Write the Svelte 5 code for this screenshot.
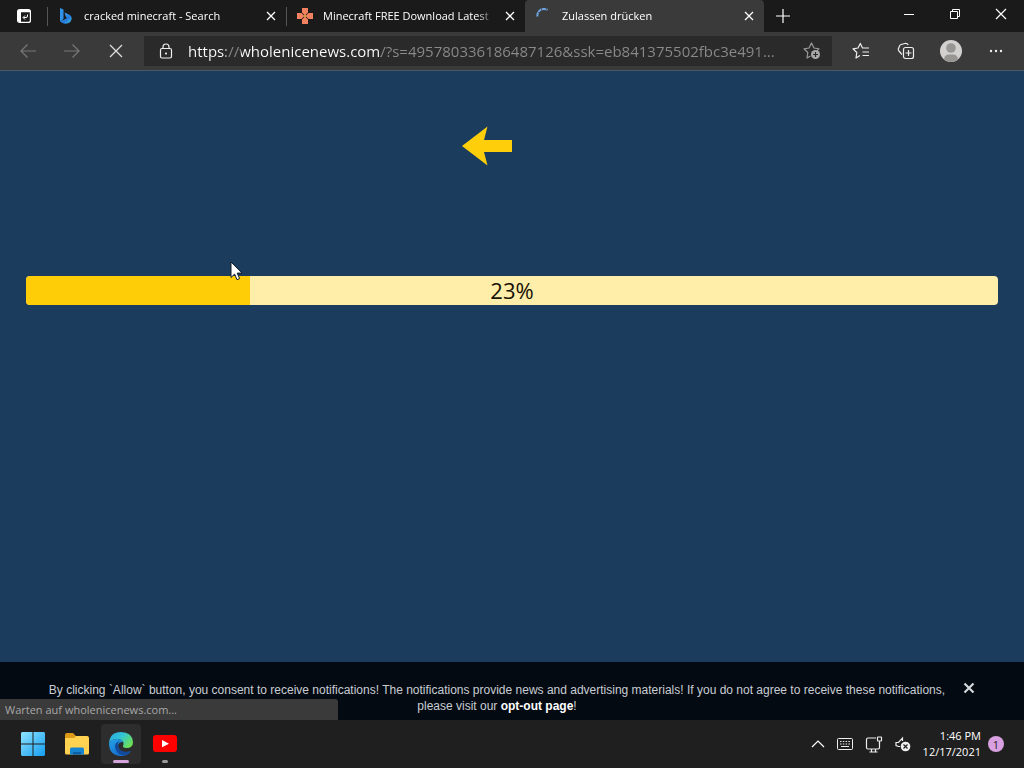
<script>
  const progress = 23;
  const tabs = [
    { title: 'cracked minecraft - Search', icon: 'bing', active: false },
    { title: 'Minecraft FREE Download Latest', icon: 'pad', active: false },
    { title: 'Zulassen drücken', icon: 'spinner', active: true }
  ];
  const url = 'https://wholenicenews.com/?s=495780336186487126&ssk=eb841375502fbc3e491...';
</script>

<div class="desktop">
  <header class="tabstrip">
    <button class="tab-actions" aria-label="Tab actions">
      <svg width="16" height="16" viewBox="0 0 16 16" fill="none" stroke="#fff">
        <rect x="1.6" y="1.6" width="12.800" height="12.800" rx="2" stroke-width="1.200" />
        <path d="M2 2h12v2.200H5V14H3l-1-1z" fill="#fff" stroke="none" />
        <path d="M11.500 6.500V8q0 1.500-1.500 1.500H7.500M9 7.500l-2 2 2 2" stroke-width="1" />
      </svg>
    </button>
    {#each tabs as tab}
      <div class="tab" class:active={tab.active}>
        <span class="favicon">
          {#if tab.icon === 'bing'}
            <svg width="16" height="16" viewBox="0 0 16 16">
              <defs>
                <linearGradient id="bing" x1="0" y1="0" x2="1" y2="1">
                  <stop offset="0" stop-color="#4fb4f5" /><stop offset=".6" stop-color="#2479dc" /><stop offset="1" stop-color="#3fd0e4" />
                </linearGradient>
              </defs>
              <path d="M2 0l3.500 1.500V11L2 13.500z" fill="#2f91ea" />
              <path d="M6.500 4.500l5 2.300Q14 8 13.700 11q-.6 3-3.700 4.300-3 1.200-6-.5-2-1-2-3 1 1.300 3.500.3l3.500-2-1.300-1.500z" fill="url(#bing)" />
            </svg>
          {:else if tab.icon === 'pad'}
            <svg width="16" height="16" viewBox="0 0 16 16" fill="#f0825f">
              <path d="M5 0h6v4.500L8 7.500l-3-3zM5 16h6v-4.500L8 8.500l-3 3zM0 5v6h4.500l3-3-3-3zM16 5v6h-4.500l-3-3 3-3z" />
              <path d="M5 5l6 6M11 5l-6 6" stroke="#57301f" />
              <circle cx="8" cy="8" r="1" fill="#f4c04a" />
            </svg>
          {:else}
            <svg width="16" height="16" viewBox="0 0 16 16" fill="none">
              <path d="M1.500 8.500A6.500 6.500 0 0 1 11.500 2" stroke="#6ea3e0" stroke-width="2" stroke-dasharray="4 .6" />
            </svg>
          {/if}
        </span>
        <span class="title">{tab.title}</span>
        <button class="close" aria-label="Close tab">
          <svg width="10" height="10" viewBox="0 0 10 10" stroke="#fff" stroke-width="1.3"><path d="M1 1l8 8M9 1L1 9" /></svg>
        </button>
      </div>
    {/each}
    <button class="new-tab" aria-label="New tab">
      <svg width="14" height="14" viewBox="0 0 14 14" stroke="#fff" stroke-width="1.200"><path d="M7 0v14M0 7h14" /></svg>
    </button>
    <div class="window-controls">
      <button aria-label="Minimize"><svg width="12" height="12" viewBox="0 0 12 12" stroke="#fff"><path d="M1 6.500h10" /></svg></button>
      <button aria-label="Restore"><svg width="12" height="12" viewBox="0 0 12 12" fill="none" stroke="#fff"><path d="M1.500 3.500h7v7h-7zM3.500 3V1.500h7v7H9" /></svg></button>
      <button aria-label="Close window"><svg width="12" height="12" viewBox="0 0 12 12" stroke="#fff" stroke-width="1.200"><path d="M1 1l10 10M11 1L1 11" /></svg></button>
    </div>
  </header>

  <nav class="toolbar" aria-label="Navigation">
    <div class="nav-buttons">
      <button aria-label="Back"><svg width="18" height="16" viewBox="0 0 18 16" fill="none" stroke="#777" stroke-width="1.200"><path d="M17 8H2M8.500 1.500L2 8l6.500 6.500" /></svg></button>
      <button aria-label="Forward"><svg width="18" height="16" viewBox="0 0 18 16" fill="none" stroke="#777" stroke-width="1.200"><path d="M1 8h15M9.500 1.500L16 8l-6.500 6.500" /></svg></button>
      <button aria-label="Stop loading"><svg width="14" height="14" viewBox="0 0 14 14" stroke="#ddd" stroke-width="1.300"><path d="M1 1l12 12M13 1L1 13" /></svg></button>
    </div>
    <div class="address">
      <button class="lock" aria-label="Site information">
        <svg width="14" height="17" viewBox="0 0 14 17" fill="none" stroke="#eee" stroke-width="1.200">
          <rect x="1.500" y="5.500" width="11" height="9.500" rx="1.500" /><path d="M4 5.500V4q0-3 3-3t3 3v1.500" /><circle cx="7" cy="10.500" r=".5" fill="#eee" />
        </svg>
      </button>
      <input type="text" aria-label="Address" value={url} spellcheck="false" />
      <button class="add-favorite" aria-label="Add to favorites">
        <svg width="18" height="18" viewBox="0 0 18 18" fill="none" stroke="#999" stroke-width="1.200">
          <path d="M7.500 14L4 16l.8-5.500L1 6.800l5-.8 2.500-5L11 6l5 .8-2 2" stroke-linejoin="round" />
          <circle cx="12.500" cy="12.500" r="4.500" fill="#aaa" stroke="none" /><path d="M12.500 10v5M10 12.500h5" stroke="#2b2b2b" />
        </svg>
      </button>
    </div>
    <div class="tools">
      <button aria-label="Favorites">
        <svg width="18" height="18" viewBox="0 0 18 18" fill="none" stroke="#eee" stroke-width="1.200" stroke-linejoin="round">
          <path d="M8 13.500L4 16l.8-5.500L1 6.800l5-.8L8.300 1.500 10.500 6H17M10.500 10H17M10.500 13.500H17" />
        </svg>
      </button>
      <button aria-label="Collections">
        <svg width="18" height="18" viewBox="0 0 18 18" fill="none" stroke="#eee" stroke-width="1.200">
          <path d="M5 12.500L2 9Q1 8 1.300 7L2.300 4.500Q2.700 3 4 2.500L8 1.500q2-.5 3.300 1.500" />
          <rect x="6.500" y="5.500" width="10" height="11" rx="2" /><path d="M11.500 8v6M8.500 11h6" />
        </svg>
      </button>
      <button aria-label="Profile">
        <svg width="22" height="22" viewBox="0 0 22 22">
          <defs><clipPath id="avatar"><circle cx="11" cy="11" r="11" /></clipPath></defs>
          <g clip-path="url(#avatar)"><path d="M0 0h22v22H0z" fill="#d2d1cf" /><circle cx="11" cy="8" r="4.800" fill="#989693" /><path d="M4 20q0-5.500 5-5.500h4q5 0 5 5.500v2H4z" fill="#989693" /></g>
        </svg>
      </button>
      <button aria-label="Settings and more">
        <svg width="14" height="4" viewBox="0 0 14 4" fill="#eee"><circle cx="2" cy="2" r="1.200" /><circle cx="7" cy="2" r="1.200" /><circle cx="12" cy="2" r="1.200" /></svg>
      </button>
    </div>
  </nav>

  <main>
    <svg class="arrow" width="50" height="40" viewBox="0 0 50 40" fill="#ffce0a" aria-hidden="true">
      <path d="M0 20L25.500 0.500 22 14h28v12H22l3.500 13.500z" />
    </svg>
    <div class="progress" role="progressbar" aria-label="Loading" aria-valuenow={progress} aria-valuemin="0" aria-valuemax="100">
      <div class="fill" style="width: {progress}%"></div>
      <span class="percent">{progress}%</span>
      <svg class="cursor" width="13" height="20" viewBox="0 0 13 20" aria-hidden="true">
        <path d="M1 1v15.500l3.600-3.400 2.400 5.600 2.600-1.100-2.400-5.500H12z" fill="#fff" stroke="#111c28" />
      </svg>
    </div>
    <aside class="consent">
      <p>By clicking `Allow` button, you consent to receive notifications! The notifications provide news and advertising materials! If you do not agree to receive these notifications, please visit our <a href="#opt-out">opt-out page</a>!</p>
      <button aria-label="Dismiss">
        <svg width="12" height="12" viewBox="0 0 12 12" stroke="#d5d8dc" stroke-width="2.200"><path d="M1.500 1.500l9 9M10.500 1.500l-9 9" /></svg>
      </button>
    </aside>
    <div class="status" role="status">Warten auf wholenicenews.com...</div>
  </main>

  <footer class="taskbar">
    <div class="apps">
      <button aria-label="Start">
        <svg width="24" height="24" viewBox="0 0 24 24">
          <defs><linearGradient id="win" gradientUnits="userSpaceOnUse" x1="0" y1="0" x2="24" y2="24"><stop offset="0" stop-color="#8fe4ff" /><stop offset="1" stop-color="#149df0" /></linearGradient></defs>
          <path d="M1 0h10.500v11.500H0V1zM12.500 0H23l1 1v10.500H12.500zM0 12.500h11.500V24H1l-1-1zM12.500 12.500H24V23l-1 1H12.500z" fill="url(#win)" />
        </svg>
      </button>
      <button aria-label="File Explorer">
        <svg width="26" height="24" viewBox="0 0 26 24">
          <path d="M1 3q0-2 2-2h6l3 3h10q2 0 2 2v6H1z" fill="#dd9a16" />
          <path d="M1 7q0-1 1-1h8l2-2h11q2 0 2 2v15q0 1.500-1.500 1.500h-21Q1 22.500 1 21z" fill="#ffd251" />
          <path d="M6 22.500V17q0-1.500 1.500-1.500h11Q20 15.500 20 17v5.500z" fill="#1584d1" /><path d="M9 22.500V20h8v2.500z" fill="#0b60a6" />
        </svg>
      </button>
      <button class="current" aria-label="Microsoft Edge">
        <svg width="26" height="26" viewBox="0 0 26 26">
          <defs>
            <linearGradient id="edge-top" x1="0" y1="0" x2="1" y2=".6"><stop offset="0" stop-color="#2aa5e8" /><stop offset=".5" stop-color="#32c5d5" /><stop offset="1" stop-color="#6bdf58" /></linearGradient>
            <linearGradient id="edge-low" x1="0" y1="0" x2=".7" y2="1"><stop offset="0" stop-color="#25a4e8" /><stop offset="1" stop-color="#1466c8" /></linearGradient>
          </defs>
          <path d="M1 12Q2 1 13 1q11 0 12 10 0 6-6.500 6-5 0-3-3.500Q16 9 10.500 8 4 7.500 1 12z" fill="url(#edge-top)" />
          <path d="M1 12Q4 7.500 10 8q4 .5 5.500 3-5-.5-5.500 4 .5 6 8 6 3 0 5-1-3 5-10 5Q1 24.500 1 12z" fill="url(#edge-low)" />
          <path d="M10 15q-1-3 2-4.500Q7 10.500 7 16q1 7 8.500 8.500 5-1 7.500-4.500-2.500 1-5 1-7-.5-8-6z" fill="#124a9c" />
        </svg>
        <span class="running wide"></span>
      </button>
      <button aria-label="YouTube">
        <svg width="24" height="18" viewBox="0 0 24 18"><rect width="24" height="17" rx="3" fill="#f00" /><path d="M9 5l7 3.700L9 12.300z" fill="#fff" /></svg>
        <span class="running"></span>
      </button>
    </div>
    <div class="tray">
      <button aria-label="Show hidden icons"><svg width="14" height="8" viewBox="0 0 14 8" fill="none" stroke="#fff" stroke-width="1.200"><path d="M1 7l6-6 6 6" /></svg></button>
      <button aria-label="Touch keyboard">
        <svg width="16" height="12" viewBox="0 0 16 12" fill="none" stroke="#eee">
          <rect x=".5" y=".5" width="15" height="11" rx="1" /><path d="M3 3.500h10M3 6h10" stroke-dasharray="1.500 1.300" /><path d="M4 8.500h8" />
        </svg>
      </button>
      <button aria-label="Network">
        <svg width="18" height="17" viewBox="0 0 18 17" fill="none" stroke="#eee" stroke-width="1.200">
          <path d="M11 2H3Q1.500 2 1.500 3.500v8Q1.500 13 3 13h10q1.500 0 1.500-1.500V7M4.500 16h8M6.500 13v3M10.500 13v3" /><rect x="12.500" y="1" width="4" height="4" rx=".5" /><path d="M14.500 5v3" />
        </svg>
      </button>
      <button aria-label="Volume muted">
        <svg width="16" height="16" viewBox="0 0 16 16" fill="none" stroke="#eee" stroke-width="1.200">
          <path d="M5 10.500H3.500L1 9.500v-3h2.500L7.500 2v3" /><circle cx="10.500" cy="10.500" r="4.800" fill="#f0f0f0" stroke="none" /><path d="M8.500 8.500l4 4M12.500 8.500l-4 4" stroke="#222" />
        </svg>
      </button>
      <button class="clock"><span>1:46 PM</span><span>12/17/2021</span></button>
      <button class="badge" aria-label="1 notification">1</button>
    </div>
  </footer>
</div>

<style>
  :global(body) { margin: 0; }
  .desktop {
    min-height: 100vh;
    display: flex;
    flex-direction: column;
    background: #1c3c5e;
    font-family: "Open Sans", "Noto Sans", sans-serif;
    font-size: 11px;
    color: #fff;
  }
  button {
    border: 0;
    padding: 0;
    background: none;
    color: inherit;
    font: inherit;
    display: flex;
    align-items: center;
    justify-content: center;
  }
  svg { display: block; flex: none; }

  .tabstrip { display: flex; height: 32px; background: #1a1a1a; }
  .tab-actions { width: 48px; flex: none; }
  .tab {
    box-sizing: border-box;
    flex: 0 1 239px;
    min-width: 0;
    display: flex;
    align-items: center;
    padding: 0 9px 0 11px;
    gap: 10px;
    background: linear-gradient(#555, #555) 0 50% / 1px 19px no-repeat;
    margin-left: -1px;
    margin-right: 1px;
  }
  .tab.active { background: #3a3a3a; border-radius: 4px 4px 0 0; }
  .favicon { flex: none; }
  .title {
    flex: 1;
    overflow: hidden;
    line-height: 16px;
    white-space: nowrap;
    mask-image: linear-gradient(90deg, #000 90%, transparent);
  }
  .close { width: 12px; height: 16px; flex: none; }
  .new-tab { width: 36px; flex: none; }
  .window-controls { display: flex; margin-left: auto; }
  .window-controls button { width: 46px; padding-bottom: 4px; }

  .toolbar {
    display: flex;
    align-items: center;
    height: 38px;
    background: #3a3a3a;
    border-bottom: 1px solid #4a5963;
  }
  .nav-buttons { display: flex; padding: 0 6px; }
  .nav-buttons button { width: 44px; height: 30px; }
  .address {
    flex: 1;
    min-width: 0;
    height: 30px;
    display: flex;
    align-items: center;
    background: #2a2a2a;
  }
  .lock { width: 44px; height: 30px; flex: none; }
  .address input {
    flex: 1;
    min-width: 0;
    border: 0;
    padding: 0;
    height: 24px;
    outline: 0;
    font-family: "Open Sans", "Noto Sans", sans-serif;
    font-size: 15px;
    background: linear-gradient(90deg, #fff 38px, #8a8a8a 38px 53px, #fff 53px 193px, #8a8a8a 193px);
    background-clip: text;
    -webkit-text-fill-color: transparent;
  }
  .add-favorite { width: 40px; height: 30px; flex: none; }
  .tools { display: flex; padding: 0 6px; }
  .tools button { width: 45px; height: 30px; }

  main { position: relative; flex: 1; display: flex; flex-direction: column; }
  .arrow { margin: 55px 0 110px; align-self: center; position: relative; right: 25px; }
  .progress {
    position: relative;
    margin: 0 26px 24px;
    height: 29px;
    border-radius: 4px;
    background: #ffedaa;
    display: flex;
    color: #171204;
    font-size: 22px;
  }
  .fill { background: #ffcd08; border-radius: 4px 0 0 4px; }
  .percent {
    position: absolute;
    inset: 0;
    line-height: 29px;
    text-align: center;
  }
  .cursor { position: absolute; left: 21%; top: -15px; }
  .consent {
    margin-top: auto;
    display: flex;
    align-items: flex-start;
    padding: 20px 48px 6px;
    gap: 16px;
    background: #040a12;
    color: #c9cdd2;
    font: 12px/16px "Liberation Sans", Arial, sans-serif;
    text-align: center;
  }
  .consent p { margin: 0; flex: 1; }
  .consent a { color: #fff; font-weight: bold; text-decoration: none; }
  .consent button { width: 14px; height: 12px; }
  .status {
    position: absolute;
    left: 0;
    bottom: 0;
    box-sizing: border-box;
    width: 33%;
    padding: 0 5px;
    line-height: 21px;
    background: #3a3a3a;
    border-radius: 0 3px 0 0;
    color: #a8a8a8;
    font-size: 11px;
  }

  .taskbar {
    display: flex;
    justify-content: space-between;
    height: 48px;
    background: #1f1f1f;
  }
  .apps { display: flex; align-items: center; gap: 4px; padding-left: 13px; }
  .apps button { position: relative; width: 40px; height: 40px; border-radius: 4px; }
  .apps .current { background: #2d2d2d; }
  .running {
    position: absolute;
    bottom: 1px;
    width: 6px;
    height: 3px;
    border-radius: 2px;
    background: #9a9a9a;
  }
  .running.wide { width: 16px; background: #d3a3dc; }
  .tray { display: flex; align-items: center; gap: 12px; padding-right: 20px; }
  .clock { flex-direction: column; align-items: flex-end; line-height: 16px; }
  .badge {
    width: 16px;
    height: 16px;
    margin-left: -5px;
    border-radius: 50%;
    background: #d8a0e0;
    color: #2a1a2c;
  }
</style>
